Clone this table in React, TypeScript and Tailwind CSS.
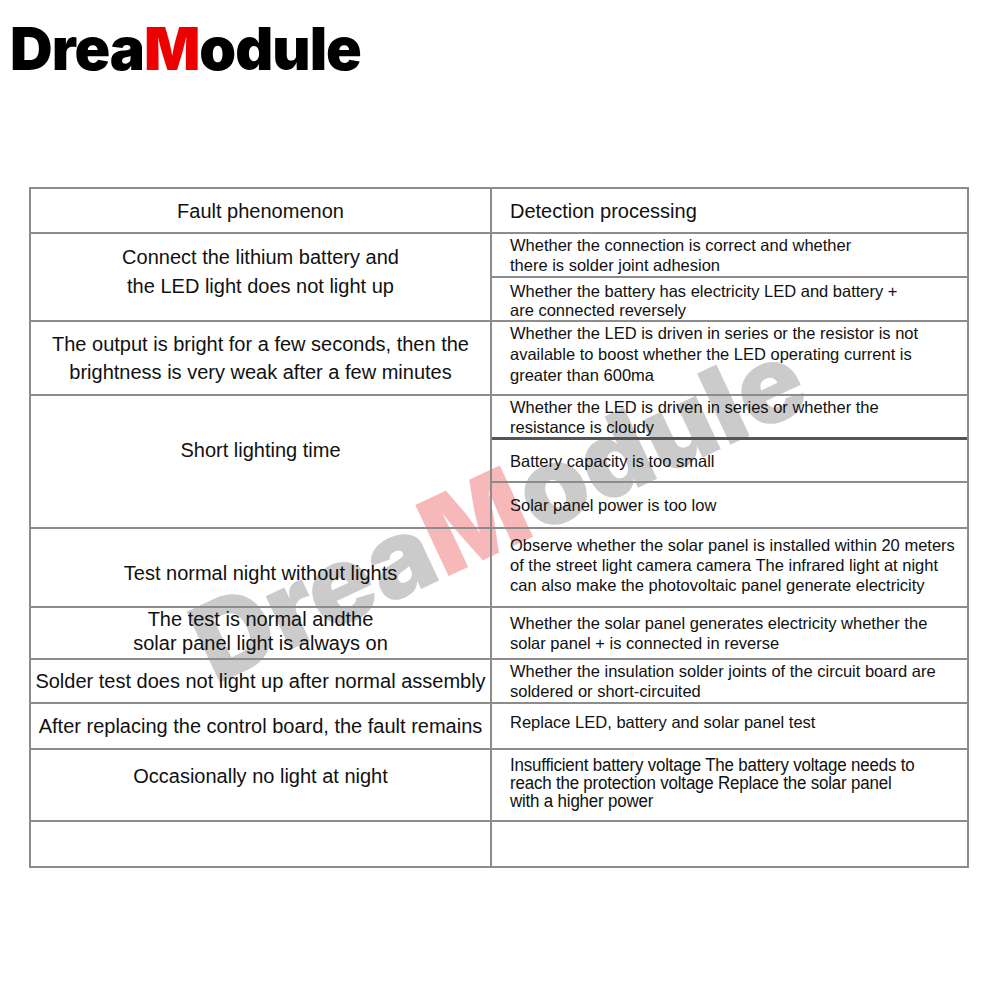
import React from "react";

const F = { fontFamily: '"Liberation Sans", Arial, sans-serif' };

function Left({ children, cls = "" }: { children: React.ReactNode; cls?: string }) {
  return (
    <div className={`w-[461px] shrink-0 border-r-2 border-[#8c8c8c] flex flex-col items-center justify-center text-center text-[20px] text-[#111] ${cls}`}>
      {children}
    </div>
  );
}

function Sub({ children, cls = "" }: { children: React.ReactNode; cls?: string }) {
  return (
    <div className={`flex flex-col justify-center pl-[18px] text-[16.5px] leading-[20px] text-[#111] whitespace-nowrap ${cls}`}>
      {children}
    </div>
  );
}

export default function App() {
  return (
    <div className="relative w-[1000px] h-[1000px] bg-white overflow-hidden" style={F}>
      {/* Watermark (behind the table text) */}
      <div
        className="pointer-events-none absolute left-[498px] top-[510px] -translate-x-1/2 -translate-y-1/2 -rotate-[25deg] whitespace-nowrap text-[108px] leading-none font-black tracking-[0px] text-[#cbcbcb]"
        style={{ fontFamily: 'Inter, "DejaVu Sans", sans-serif' }}
      >
        Drea<span className="text-[#f6b8b8]">M</span>odule
      </div>

      {/* Logo */}
      <div
        className="absolute left-[10px] top-[19px] text-[59px] leading-none font-black tracking-[-1px] text-black"
        style={{ fontFamily: 'Inter, "DejaVu Sans", sans-serif' }}
      >
        Drea<span className="text-[#ee0000]">M</span>odule
      </div>

      {/* Table */}
      <div className="absolute left-[29px] top-[187px] w-[940px] border-2 border-[#8c8c8c] flex flex-col">
        {/* header */}
        <div className="flex h-[43px]">
          <Left cls="text-[20px]">Fault phenomenon</Left>
          <div className="flex-1 flex items-center pl-[18px] text-[20px] text-[#111]">Detection processing</div>
        </div>
        {/* row 1 */}
        <div className="flex h-[88px] border-t-2 border-[#8c8c8c]">
          <Left cls="leading-[29px] pb-[11px]">
            <div>Connect the lithium battery and</div>
            <div>the LED light does not light up</div>
          </Left>
          <div className="flex-1 flex flex-col">
            <Sub cls="h-[42px]">
              <div>Whether the connection is correct and whether</div>
              <div>there is solder joint adhesion</div>
            </Sub>
            <Sub cls="flex-1 border-t-2 border-[#8c8c8c] pt-[2px]">
              <div>Whether the battery has electricity LED and battery +</div>
              <div className="leading-[18px]">are connected reversely</div>
            </Sub>
          </div>
        </div>
        {/* row 2 */}
        <div className="flex h-[74px] border-t-2 border-[#8c8c8c]">
          <Left cls="leading-[28px]">
            <div>The output is bright for a few seconds, then the</div>
            <div>brightness is very weak after a few minutes</div>
          </Left>
          <Sub cls="flex-1 leading-[21px] pb-[8px]">
            <div>Whether the LED is driven in series or the resistor is not</div>
            <div>available to boost whether the LED operating current is</div>
            <div>greater than 600ma</div>
          </Sub>
        </div>
        {/* row 3 */}
        <div className="flex h-[133px] border-t-2 border-[#8c8c8c]">
          <Left cls="pb-[24px]">Short lighting time</Left>
          <div className="flex-1 flex flex-col">
            <Sub cls="h-[41px]">
              <div>Whether the LED is driven in series or whether the</div>
              <div>resistance is cloudy</div>
            </Sub>
            <Sub cls="h-[44px] border-t-[3px] border-[#555]">Battery capacity is too small</Sub>
            <Sub cls="flex-1 border-t-2 border-[#8c8c8c]">Solar panel power is too low</Sub>
          </div>
        </div>
        {/* row 4 */}
        <div className="flex h-[79px] border-t-2 border-[#8c8c8c]">
          <Left cls="pt-[10px]">Test normal night without lights</Left>
          <Sub cls="flex-1 pb-[6px]">
            <div>Observe whether the solar panel is installed within 20 meters</div>
            <div>of the street light camera camera The infrared light at night</div>
            <div>can also make the photovoltaic panel generate electricity</div>
          </Sub>
        </div>
        {/* row 5 */}
        <div className="flex h-[52px] border-t-2 border-[#8c8c8c]">
          <Left cls="leading-[24px] pb-[4px]">
            <div>The test is normal andthe</div>
            <div>solar panel light is always on</div>
          </Left>
          <Sub cls="flex-1">
            <div>Whether the solar panel generates electricity whether the</div>
            <div>solar panel + is connected in reverse</div>
          </Sub>
        </div>
        {/* row 6 */}
        <div className="flex h-[44px] border-t-2 border-[#8c8c8c]">
          <Left>Solder test does not light up after normal assembly</Left>
          <Sub cls="flex-1 leading-[18px]">
            <div>Whether the insulation solder joints of the circuit board are</div>
            <div>soldered or short-circuited</div>
          </Sub>
        </div>
        {/* row 7 */}
        <div className="flex h-[46px] border-t-2 border-[#8c8c8c]">
          <Left>After replacing the control board, the fault remains</Left>
          <Sub cls="flex-1 pb-[8px]">Replace LED, battery and solar panel test</Sub>
        </div>
        {/* row 8 */}
        <div className="flex h-[72px] border-t-2 border-[#8c8c8c]">
          <Left cls="pb-[18px]">Occasionally no light at night</Left>
          <div className="flex-1 flex flex-col justify-center pl-[18px] pb-[4px] text-[18px] leading-[18px] text-[#111]">
            <div className="origin-left scale-x-[0.94] whitespace-nowrap tracking-[-0.2px]">
              <div>Insufficient battery voltage The battery voltage needs to</div>
              <div>reach the protection voltage Replace the solar panel</div>
              <div>with a higher power</div>
            </div>
          </div>
        </div>
        {/* row 9 */}
        <div className="flex h-[46px] border-t-2 border-[#8c8c8c]">
          <Left> </Left>
          <div className="flex-1" />
        </div>
      </div>
    </div>
  );
}
